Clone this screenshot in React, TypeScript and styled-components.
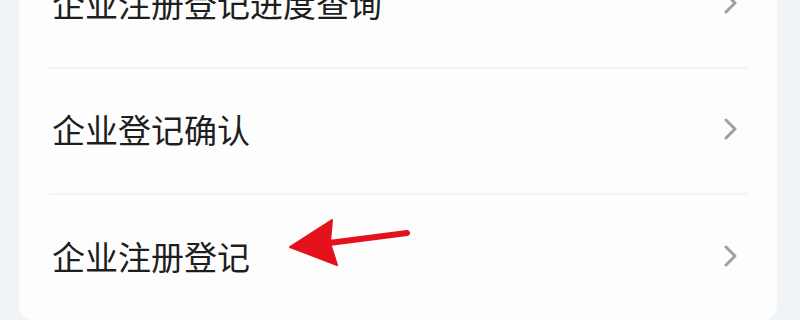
import styled, { createGlobalStyle } from 'styled-components';

const GlobalStyle = createGlobalStyle`
  html, body {
    margin: 0;
    padding: 0;
    background: #f1f4f7;
    overflow: hidden;
  }
`;

const Page = styled.div`
  width: 800px;
  height: 320px;
  box-sizing: border-box;
  padding: 0 23px 0 19px;
  overflow: hidden;
  background: #f1f4f7;
`;

const Card = styled.div`
  margin-top: -57px; // first row is cut off at the top of the shot
  background: #fdfdfd;
  border-radius: 16px;
  padding: 0 30px;
  display: flex;
  flex-direction: column;
`;

const Row = styled.div<{ $last?: boolean }>`
  position: relative;
  height: 126px;
  box-sizing: border-box;
  padding-bottom: 5px;
  display: flex;
  align-items: center;
  justify-content: space-between;
  border-bottom: ${p => (p.$last ? 'none' : '2px solid #f2f2f2')};
`;

const Label = styled.span`
  font-family: "Noto Sans CJK SC", "Noto Sans", sans-serif;
  font-size: 33px;
  color: #1e1e1e;
  padding-left: 3px;
`;

const Chevron = styled.svg`
  width: 16px;
  height: 22px;
  margin-right: 8px;
`;

const Arrow = styled.svg`
  position: absolute;
  left: 236px;
  top: 22px;
  width: 126px;
  height: 52px;
`;

function ChevronRight() {
  return (
    <Chevron viewBox="0 0 16 22">
      <polyline points="3,2 12,11 3,20" fill="none" stroke="#a0a0a0" strokeWidth="3" strokeLinecap="round" strokeLinejoin="round" />
    </Chevron>
  );
}

const items = ['企业注册登记进度查询', '企业登记确认', '企业注册登记'];

function App() {
  return (
    <Page>
      <GlobalStyle />
      <Card>
        {items.map((text, i) => (
          <Row key={text} $last={i === items.length - 1}>
            <Label>{text}</Label>
            <ChevronRight />
            {i === items.length - 1 && (
              <Arrow viewBox="0 0 126 52">
                <line x1="44" y1="26" x2="122" y2="16" stroke="#e3121b" strokeWidth="6" strokeLinecap="round" />
                <polygon points="5,30 47,3 45,26 52,48" fill="#e3121b" strokeLinejoin="round" stroke="#e3121b" strokeWidth="2" />
              </Arrow>
            )}
          </Row>
        ))}
      </Card>
    </Page>
  );
}

export default App;
